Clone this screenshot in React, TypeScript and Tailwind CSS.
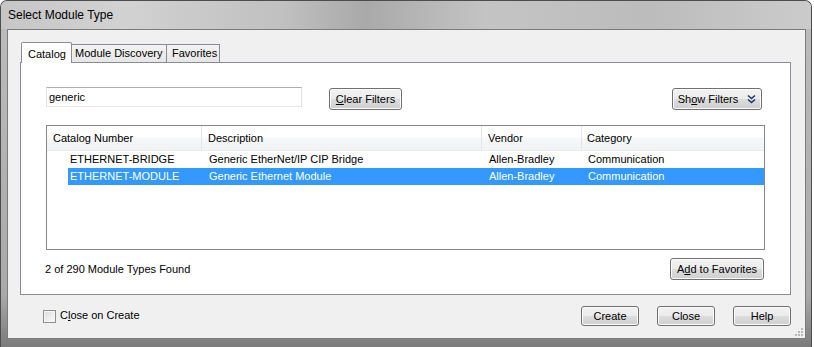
import React from "react";

const btn =
  "flex items-center justify-center whitespace-nowrap rounded-[3px] border border-[#707070] bg-[linear-gradient(to_bottom,#f2f2f2_0%,#ebebeb_50%,#dddddd_50%,#cfcfcf_100%)] shadow-[inset_0_0_0_1px_#fcfcfc] text-[11px] text-black";

function Chevron() {
  return (
    <svg width="9" height="10" viewBox="0 0 9 10" className="ml-[9px]">
      <polyline points="1,1.5 4.5,4.5 8,1.5" fill="none" stroke="#1e3a66" strokeWidth="1.6" />
      <polyline points="1,5.5 4.5,8.5 8,5.5" fill="none" stroke="#1e3a66" strokeWidth="1.6" />
    </svg>
  );
}

const rows = [
  { cat: "ETHERNET-BRIDGE", desc: "Generic EtherNet/IP CIP Bridge", vendor: "Allen-Bradley", category: "Communication", sel: false },
  { cat: "ETHERNET-MODULE", desc: "Generic Ethernet Module", vendor: "Allen-Bradley", category: "Communication", sel: true },
];

export default function App() {
  return (
    <div className="w-[814px] h-[347px] bg-white overflow-hidden font-['Liberation_Sans',Arial,sans-serif] text-[11px] text-black">
      <div className="w-[812px] h-[347px] rounded-t-[7px] border border-b-0 border-[#4d4d4d] bg-[linear-gradient(to_bottom,#bdbdbd,#a9a9a9_85%,#7a7a7a)] flex flex-col">
        {/* title bar */}
        <div className="h-[28px] pl-[7px] flex items-center rounded-t-[6px] bg-[linear-gradient(to_right,#c6c6c6,#d2d2d2_15%,#c0c0c0_35%,#a9a9a9_45%,#c4c4c4_60%,#bcbcbc_80%,#cbcbcb)]">
          <span className="text-[12px] pb-[1px]">Select Module Type</span>
        </div>
        {/* client */}
        <div className="ml-[6px] w-[799px] h-[310px] border border-[#7b7b7b] bg-[#f0f0f0] flex flex-col relative">
          {/* tabs */}
          <div className="ml-[12px] mt-[12px] w-[771px] flex flex-col">
            <div className="h-[20px] flex items-end pl-[1px] whitespace-nowrap">
              <div className="relative z-10 -mb-px h-[21px] w-[51px] border border-b-0 border-[#898c95] bg-white rounded-t-[2px] flex items-start pt-[3px] pl-[6px]">
                Catalog
              </div>
              <div className="h-[18px] w-[95px] border border-l-0 border-b-0 border-[#898c95] bg-[linear-gradient(to_bottom,#f3f3f3,#e6e6e6)] flex items-center pl-[3px]">
                Module Discovery
              </div>
              <div className="h-[18px] w-[53px] border border-l-0 border-b-0 border-[#898c95] bg-[linear-gradient(to_bottom,#f3f3f3,#e6e6e6)] flex items-center pl-[5px]">
                Favorites
              </div>
            </div>
            {/* panel */}
            <div className="h-[233px] border border-[#898c95] bg-white flex flex-col pl-[25px] pr-[25px] pt-[24px]">
              {/* search row */}
              <div className="flex items-start">
                <div className="w-[256px] h-[20px] border border-[#abadb3] border-b-[#e3e9ef] border-r-[#dbdfe6] border-l-[#e2e3ea] flex items-center pl-[2px]">
                  generic
                </div>
                <div className={`${btn} ml-[27px] mt-[1px] w-[73px] h-[22px]`}>
                  <span><span className="underline">C</span>lear Filters</span>
                </div>
                <div className="flex-1" />
                <div className={`${btn} mr-[3px] mt-[1px] w-[90px] h-[22px]`}>
                  <span>Sh<span className="underline">o</span>w Filters</span>
                  <Chevron />
                </div>
              </div>
              {/* list */}
              <div className="mt-[15px] w-[719px] h-[125px] border border-[#828790] bg-white flex flex-col">
                <div className="h-[25px] flex bg-[linear-gradient(to_bottom,#ffffff_0%,#ffffff_45%,#f7f8f9_50%,#f1f2f3_100%)] border-b border-[#ececec]">
                  <div className="w-[155px] pl-[6px] flex items-center border-r border-[#e3e5e7]">Catalog Number</div>
                  <div className="w-[280px] pl-[6px] flex items-center border-r border-[#e3e5e7]">Description</div>
                  <div className="w-[100px] pl-[6px] flex items-center border-r border-[#e3e5e7]">Vendor</div>
                  <div className="flex-1 pl-[5px] flex items-center">Category</div>
                </div>
                {rows.map((r) => (
                  <div
                    key={r.cat}
                    className={`ml-[21px] h-[17px] flex items-center whitespace-nowrap ${r.sel ? "bg-[#3399ff] text-white" : ""}`}
                  >
                    <div className="w-[134px] pl-[2px]">{r.cat}</div>
                    <div className="w-[280px] pl-[7px]">{r.desc}</div>
                    <div className="w-[100px] pl-[7px]">{r.vendor}</div>
                    <div className="flex-1 pl-[6px]">{r.category}</div>
                  </div>
                ))}
              </div>
              {/* status row */}
              <div className="mt-[8px] flex items-center -ml-[1px] pr-[1px]">
                <span>2 of 290 Module Types Found</span>
                <div className="flex-1" />
                <div className={`${btn} w-[94px] h-[22px]`}>
                  <span>A<span className="underline">d</span>d to Favorites</span>
                </div>
              </div>
            </div>
          </div>
          {/* bottom row */}
          <div className="mt-[11px] ml-[35px] mr-[14px] flex items-center">
            <div className="w-[13px] h-[13px] border border-[#8f8f8f] bg-[linear-gradient(135deg,#dcdcdc,#fbfbfb)] shadow-[inset_0_0_0_1px_#f4f4f4]" />
            <span className="ml-[4px] mb-[1px]">C<span className="underline">l</span>ose on Create</span>
            <div className="flex-1" />
            <div className={`${btn} w-[58px] h-[20px]`}>Create</div>
            <div className={`${btn} ml-[18px] w-[58px] h-[20px]`}>Close</div>
            <div className={`${btn} ml-[18px] w-[58px] h-[20px]`}>Help</div>
          </div>
          {/* grip */}
          <svg className="absolute right-[1px] bottom-[1px]" width="10" height="10" viewBox="0 0 10 10">
            {[
              [7, 1], [7, 4], [4, 4], [7, 7], [4, 7], [1, 7],
            ].map(([x, y], i) => (
              <rect key={i} x={x} y={y} width="2" height="2" fill="#b8b8b8" />
            ))}
          </svg>
        </div>
      </div>
    </div>
  );
}
